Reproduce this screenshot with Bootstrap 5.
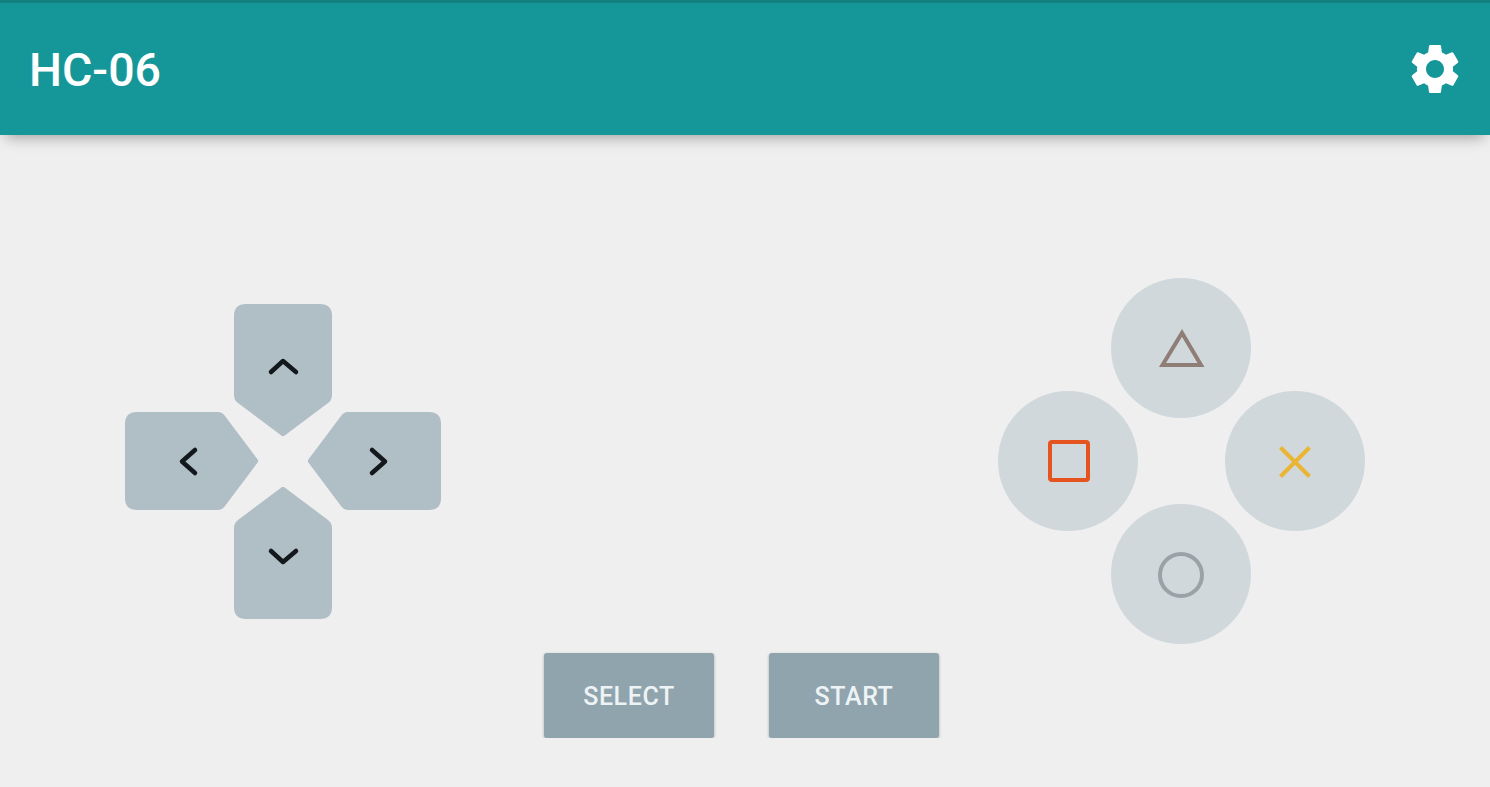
<!DOCTYPE html>
<html lang="en">
<head>
    <meta charset="UTF-8">
    <meta name="viewport" content="width=device-width, initial-scale=1.0">
    <title>HC-06</title>
    <link rel="stylesheet" href="https://cdn.jsdelivr.net/npm/bootstrap@5.3.0/dist/css/bootstrap.min.css">
    <style>
        body { background: #efeff0; font-family: Roboto, "Liberation Sans", sans-serif; }
        .app-bar { height: 135px; background: #159799; border-top: 3px solid #11807f; padding: 0 25px 0 29px; box-shadow: 0 8px 14px -6px rgba(0, 0, 0, .35); }
        .app-title { font-size: 46.500px; font-weight: 500; color: #fff; margin: 3px 0 0; padding: 0; line-height: 1; }
        .controls { padding: 143px 125px 0; }
        /* d-pad: the arms overlap the middle tracks, so it's one 5x5 grid */
        .dpad { display: grid; margin-top: 26px; grid-template-columns: 109px 24px 50px 24px 109px; grid-template-rows: 108px 24px 51px 23px 109px; }
        .dpad-btn { padding: 0; border: 0; background: none; display: block; line-height: 0; }
        .dpad-btn path.arm { fill: #b0bec5; }
        .dpad-btn path.chev { fill: none; stroke: #12181c; stroke-width: 4.500; stroke-linecap: round; stroke-linejoin: round; }
        .d-up { grid-column: 2 / 5; grid-row: 1 / 3; }
        .d-left { grid-column: 1 / 3; grid-row: 2 / 5; }
        .d-right { grid-column: 4 / 6; grid-row: 2 / 5; }
        .d-down { grid-column: 2 / 5; grid-row: 4 / 6; }
        .face-pad { display: grid; grid-template-columns: 113px 27px 87px 26px 114px; grid-template-rows: 113px 27px 86px 27px 113px; }
        .face-btn { width: 140px; height: 140px; padding: 0; border: 0; background: #d0d8dc; line-height: 0; }
        .f-top { grid-column: 2 / 5; grid-row: 1 / 3; }
        .f-left { grid-column: 1 / 3; grid-row: 2 / 5; }
        .f-right { grid-column: 4 / 6; grid-row: 2 / 5; }
        .f-bottom { grid-column: 2 / 5; grid-row: 4 / 6; }
        .face-btn svg { fill: none; stroke-width: 4; }
        .menu-row { margin-top: 9px; padding-right: 7px; gap: 55px; }
        .menu-btn { width: 170px; height: 85px; padding: 2px 0 0; background: #90a4ae; color: #eef3f5; font-size: 25px; letter-spacing: .6px; font-weight: 500; border: 0; border-radius: 3px; box-shadow: 0 1px 3px rgba(0, 0, 0, .3); }
        .menu-btn:hover { background: #90a4ae; color: #eef3f5; }
    </style>
</head>
<body>
    <nav class="navbar app-bar d-flex justify-content-between align-items-center">
        <h1 class="navbar-brand app-title">HC-06</h1>
        <svg width="60" height="60" viewBox="0 0 24 24" fill="#fff" aria-label="Settings"><path d="M19.14,12.94c0.04-0.3,0.06-0.61,0.06-0.94c0-0.32-0.02-0.64-0.07-0.94l2.03-1.58c0.18-0.14,0.23-0.41,0.12-0.61l-1.92-3.32c-0.12-0.22-0.37-0.29-0.59-0.22l-2.39,0.96c-0.5-0.38-1.03-0.7-1.62-0.94L14.4,2.81c-0.04-0.24-0.24-0.41-0.48-0.41h-3.84c-0.24,0-0.43,0.17-0.47,0.41L9.25,5.35C8.66,5.59,8.12,5.92,7.63,6.29L5.24,5.33c-0.22-0.08-0.47,0-0.59,0.22L2.74,8.87C2.62,9.08,2.66,9.34,2.86,9.48l2.03,1.58C4.84,11.36,4.8,11.69,4.8,12s0.02,0.64,0.07,0.94l-2.03,1.58c-0.18,0.14-0.23,0.41-0.12,0.61l1.92,3.32c0.12,0.22,0.37,0.29,0.59,0.22l2.39-0.96c0.5,0.38,1.03,0.7,1.62,0.94l0.36,2.54c0.05,0.24,0.24,0.41,0.48,0.41h3.84c0.24,0,0.44-0.17,0.47-0.41l0.36-2.54c0.59-0.24,1.13-0.56,1.62-0.94l2.39,0.96c0.22,0.08,0.47,0,0.59-0.22l1.92-3.32c0.12-0.22,0.07-0.47-0.12-0.61L19.14,12.94z M12,15.6c-1.98,0-3.6-1.62-3.6-3.6s1.62-3.6,3.6-3.6s3.6,1.62,3.6,3.6S13.98,15.6,12,15.6z"/></svg>
    </nav>

    <div class="controls d-flex justify-content-between align-items-start">
        <!-- D-pad -->
        <div class="dpad">
            <button class="dpad-btn d-up" aria-label="Up">
                <svg width="98" height="132" viewBox="0 0 98 132">
                    <path class="arm" d="M12 0H86Q98 0 98 12V91Q98 96 94 99L50 132Q49 132.500 48 132L4 99Q0 96 0 91V12Q0 0 12 0Z"/>
                    <path class="chev" d="M37 68L49 57L62 68"/>
                </svg>
            </button>
            <button class="dpad-btn d-left" aria-label="Left">
                <svg width="133" height="98" viewBox="0 0 133 98">
                    <path class="arm" d="M12 0H93Q97 0 100 4L133 48Q133.500 49 133 50L100 94Q97 98 93 98H12Q0 98 0 86V12Q0 0 12 0Z"/>
                    <path class="chev" d="M70 38L57 49.500L70 61"/>
                </svg>
            </button>
            <button class="dpad-btn d-right" aria-label="Right">
                <svg width="133" height="98" viewBox="0 0 133 98">
                    <path class="arm" d="M40 0H121Q133 0 133 12V86Q133 98 121 98H40Q36 98 33 94L0 50Q-0.500 49 0 48L33 4Q36 0 40 0Z"/>
                    <path class="chev" d="M64 38L77 49.500L64 61"/>
                </svg>
            </button>
            <button class="dpad-btn d-down" aria-label="Down">
                <svg width="98" height="132" viewBox="0 0 98 132">
                    <path class="arm" d="M48 0Q49 -0.500 50 0L94 33Q98 36 98 41V120Q98 132 86 132H12Q0 132 0 120V41Q0 36 4 33Z"/>
                    <path class="chev" d="M37 64L49 75L62 64"/>
                </svg>
            </button>
        </div>

        <!-- Buttons triangle, square, cross, circle -->
        <div class="face-pad">
            <button class="face-btn rounded-circle f-top" aria-label="Triangle">
                <svg width="140" height="140" viewBox="0 0 140 140" stroke="#8f7e76"><path d="M51.500 87L71 55L90 87Z"/></svg>
            </button>
            <button class="face-btn rounded-circle f-left" aria-label="Square">
                <svg width="140" height="140" viewBox="0 0 140 140" stroke="#e5531f"><rect x="52" y="51" width="38" height="38" rx="2"/></svg>
            </button>
            <button class="face-btn rounded-circle f-right" aria-label="Cross">
                <svg width="140" height="140" viewBox="0 0 140 140" stroke="#e9b533"><path d="M55.500 56.500L84.500 85.500M84.500 56.500L55.500 85.500"/></svg>
            </button>
            <button class="face-btn rounded-circle f-bottom" aria-label="Circle">
                <svg width="140" height="140" viewBox="0 0 140 140" stroke="#9aa2a6"><circle cx="70" cy="71" r="21"/></svg>
            </button>
        </div>
    </div>

    <div class="menu-row d-flex justify-content-center">
        <button class="btn menu-btn">SELECT</button>
        <button class="btn menu-btn">START</button>
    </div>
</body>
</html>
